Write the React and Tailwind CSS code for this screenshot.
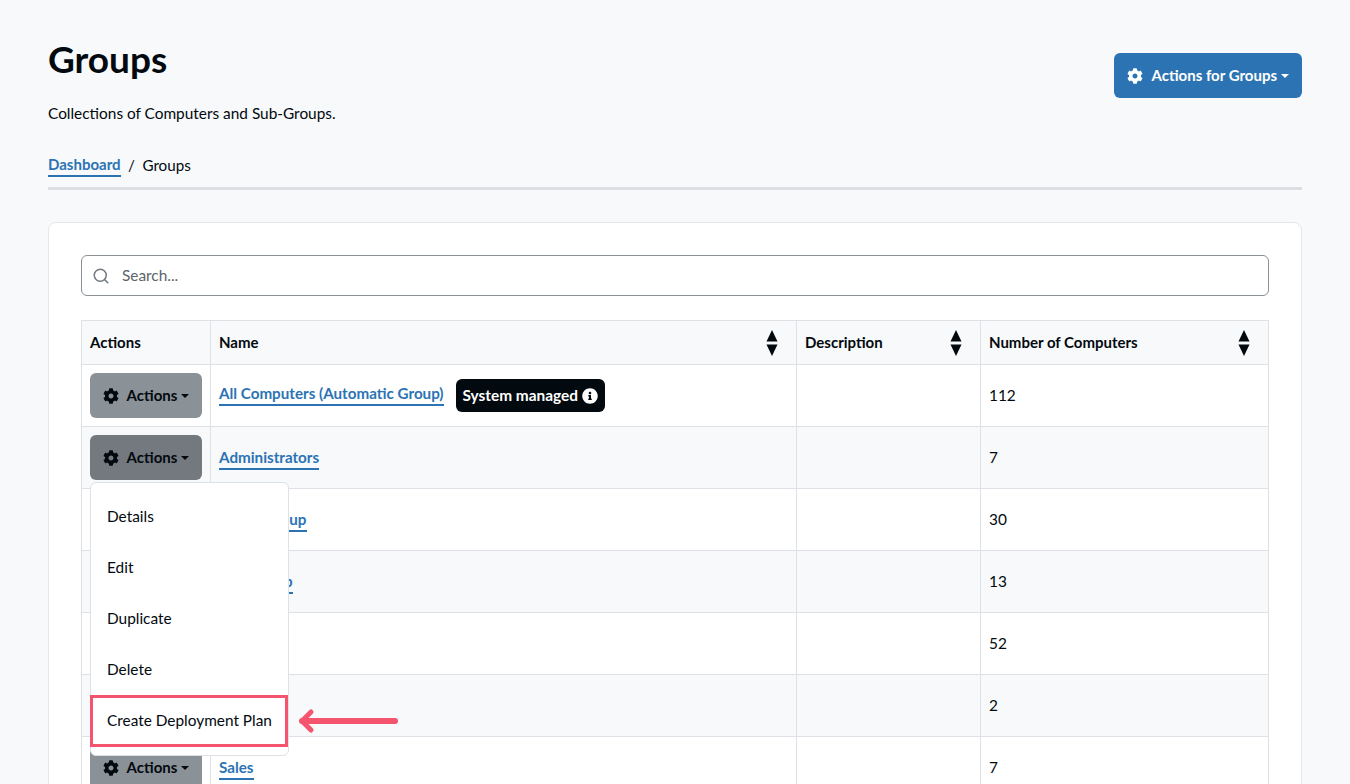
import React from 'react';
import { FaCog, FaInfoCircle } from 'react-icons/fa';
import { Search } from 'lucide-react';

const rows = [
    { name: 'All Computers (Automatic Group)', count: 112, badge: true },
    { name: 'Administrators', count: 7 },
    { name: 'Office Group', count: 30 },
    { name: 'Test Group', count: 13 },
    { name: 'Desktops', count: 52 },
    { name: 'Managers', count: 2 },
    { name: 'Sales', count: 7 },
];

const menuItems = ['Details', 'Edit', 'Duplicate', 'Delete'];

const Caret = () => (
    <span className="inline-block ml-[4px] w-0 h-0 border-x-[4px] border-x-transparent border-t-[4px] border-t-current align-middle"></span>
);

const SortArrows = () => (
    <svg width="12" height="26" viewBox="0 0 12 26" fill="currentColor">
        <path d="M6 0l5.5 11.5H.5z" />
        <path d="M6 26L.5 14.5h11z" />
    </svg>
);

const ActionsButton = ({ open }) => (
    <button className={`flex items-center justify-center w-[112px] h-[45px] rounded-md text-[15px] font-bold text-[#02090f] ${open ? 'bg-[#73797f]' : 'bg-[#8a9197]'}`}>
        <FaCog className="w-4 h-4 mr-2" />
        Actions
        <Caret />
    </button>
);

const HeaderCell = ({ label, width, sortable }) => (
    <th className={`${width} h-[44px] px-2 border border-[#dee2e6] bg-[#f8f9fa] text-left text-[15px] font-bold`}>
        <div className="flex items-center justify-between pr-[10px]">
            {label}
            {sortable && <SortArrows />}
        </div>
    </th>
);

const App = () => {
    return (
        <div className="relative h-screen overflow-hidden bg-[#f8f9fb] px-12 text-[#02090f] font-['Lato','Noto_Sans',sans-serif]">
            {/* Page header */}
            <div className="flex justify-between">
                <div>
                    <h1 className="mt-[38px] text-[37px] leading-[42px] font-bold">Groups</h1>
                    <p className="mt-[21px] text-[15.4px] leading-6">Collections of Computers and Sub-Groups.</p>
                </div>
                <button className="mt-[53px] flex items-center h-[45px] px-[13px] rounded-md bg-[#2b73b3] text-white text-[15px] font-bold">
                    <FaCog className="w-4 h-4 mr-[9px]" />
                    Actions for Groups
                    <Caret />
                </button>
            </div>

            {/* Breadcrumb */}
            <div className="mt-[28px] flex items-start text-[15.2px] leading-6 border-b-[3px] border-[#dcdee1] h-[37px]">
                <a className="mt-px font-bold text-[15px] text-[#2b73b3] border-b-2 border-[#2b73b3] leading-[21px]">Dashboard</a>
                <span className="mx-[7.5px]">/</span>
                <span>Groups</span>
            </div>

            {/* Card */}
            <div className="mt-[32px] bg-white border border-[#e4e7ea] rounded-lg px-8 pt-8">
                <div className="flex items-center h-[41px] border border-[#8a9197] rounded-md px-[10px] text-[15.4px] text-[#5c636a]">
                    <Search className="w-[18px] h-[18px] mr-[12px] text-[#73797f]" />
                    <span>Search...</span>
                </div>

                <table className="mt-6 w-full table-fixed border-collapse">
                    <thead>
                        <tr>
                            <HeaderCell label="Actions" width="w-[129px]" />
                            <HeaderCell label="Name" width="w-[586px]" sortable />
                            <HeaderCell label="Description" width="w-[184px]" sortable />
                            <HeaderCell label="Number of Computers" sortable />
                        </tr>
                    </thead>
                    <tbody>
                        {rows.map((row, i) => (
                            <tr key={row.name} className={i % 2 === 1 ? 'bg-[#f8f9fa]' : 'bg-white'}>
                                <td className="h-[62px] px-2 border border-[#dee2e6]">
                                    <ActionsButton open={i === 1} />
                                </td>
                                <td className="px-2 border border-[#dee2e6] text-[15.2px]">
                                    <div className="flex items-center">
                                        <a className={`font-bold text-[#2b73b3] border-b-2 border-[#2b73b3] leading-[22px] ${row.badge ? 'mb-[4px]' : ''}`}>{row.name}</a>
                                        {row.badge && (
                                            <span className="ml-[12px] flex items-center h-[33px] px-[7px] rounded-md bg-[#02090f] text-white text-[15.4px] font-bold">
                                                System managed
                                                <FaInfoCircle className="ml-[4px] w-4 h-4" />
                                            </span>
                                        )}
                                    </div>
                                </td>
                                <td className="px-2 border border-[#dee2e6]"></td>
                                <td className="px-2 border border-[#dee2e6] text-[15.4px]">{row.count}</td>
                            </tr>
                        ))}
                    </tbody>
                </table>
            </div>

            {/* Open dropdown menu */}
            <div className="absolute left-[90px] top-[482px] w-[199px] h-[274px] bg-white border border-[#dee2e6] rounded-md pt-[8px]">
                {menuItems.map((item) => (
                    <div key={item} className="flex items-center h-[51px] pl-4 text-[15.4px]">{item}</div>
                ))}
                <div className="-ml-px flex items-center h-[52px] w-[198px] pl-[14px] border-[3px] border-[#f5546f] text-[15.4px]">
                    Create Deployment Plan
                </div>
            </div>

            {/* Annotation arrow */}
            <svg className="absolute left-[297px] top-[708px]" width="103" height="26" viewBox="0 0 103 26" fill="none" stroke="#f5546f" strokeLinecap="round" strokeLinejoin="round">
                <path d="M5 13h93" strokeWidth="6" />
                <path d="M14 4l-9 9 9 9" strokeWidth="5" />
            </svg>
        </div>
    );
};

export default App;
